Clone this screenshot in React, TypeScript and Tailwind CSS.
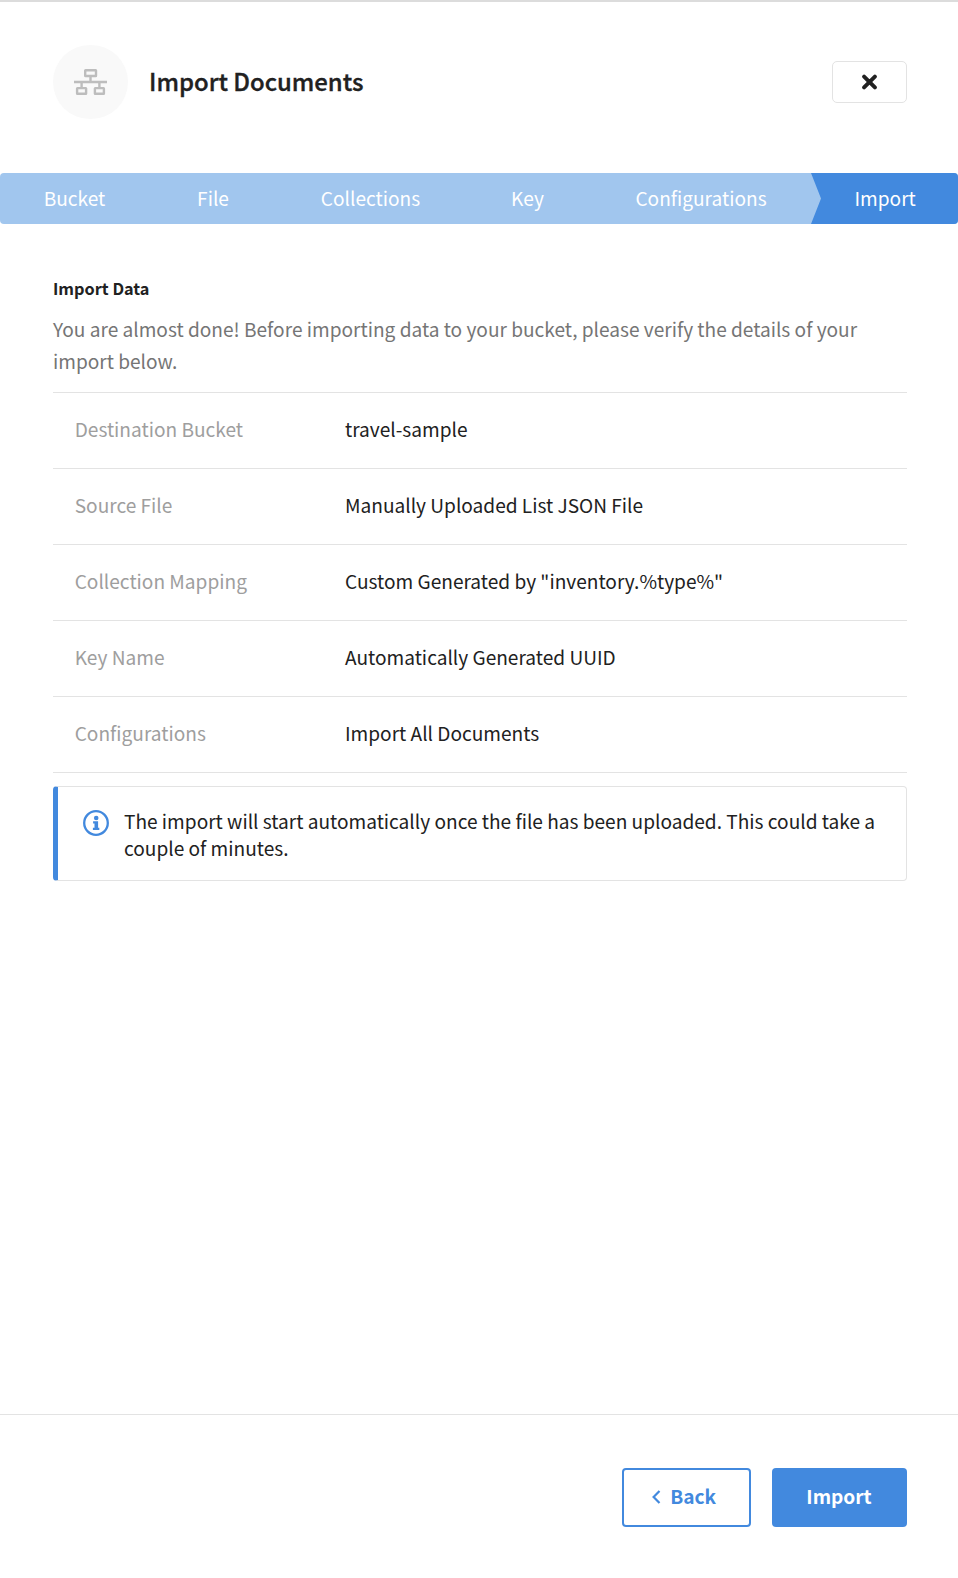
const steps = [
  { name: "Bucket", cls: "w-[149px]" },
  { name: "File", cls: "w-[128px]" },
  { name: "Collections", cls: "w-[187px]" },
  { name: "Key", cls: "w-[127px]" },
  { name: "Configurations", cls: "w-[220px]" },
];

const details = [
  ["Destination Bucket", "travel-sample"],
  ["Source File", "Manually Uploaded List JSON File"],
  ["Collection Mapping", 'Custom Generated by "inventory.%type%"'],
  ["Key Name", "Automatically Generated UUID"],
  ["Configurations", "Import All Documents"],
];

function NetworkIcon() {
  return (
    <svg width="33" height="26" viewBox="0 0 33 26" fill="none" stroke="#bdbdbd" strokeWidth="2.4">
      <rect x="11.2" y="1.2" width="10.8" height="5.8" rx="0.3" />
      <rect x="3.1" y="19.1" width="9" height="5.7" rx="0.3" />
      <rect x="20.9" y="19.1" width="9" height="5.7" rx="0.3" />
      <path d="M0 13H33M16.5 7V13M7.6 13V19M25.4 13V19" />
    </svg>
  );
}

function InfoIcon() {
  return (
    <svg width="26" height="26" viewBox="0 0 26 26" className="shrink-0">
      <circle cx="13" cy="13" r="11.8" fill="none" stroke="#4289de" strokeWidth="2.3" />
      <circle cx="13.2" cy="8" r="2.3" fill="#4289de" />
      <path d="M10.1 11.3H15.1V17.8H16.3V19.9H9.9V17.8H11.5V13.4H10.1Z" fill="#4289de" />
    </svg>
  );
}

export default function App() {
  return (
    <div className="flex h-[1578px] w-[958px] flex-col border-t-2 border-[#dcdcdc] bg-white font-['Noto_Sans_CJK_SC',sans-serif] text-[19.1px] text-[#212121]">
      <header className="flex h-[171px] items-start pr-[51px] pl-[53px] pt-[43px]">
        <div className="flex h-[74px] w-[75px] items-center justify-center rounded-full bg-[#f9f9f9]">
          <NetworkIcon />
        </div>
        <h1 className="ml-[21px] text-[23.9px] leading-[72px] font-medium [-webkit-text-stroke:0.35px_#212121]">
          Import Documents
        </h1>
        <button className="mt-4 ml-auto flex h-[42px] w-[75px] items-center justify-center rounded-[5px] border border-[#e3e3e3]">
          <svg width="15" height="16" viewBox="0 0 15 16" stroke="#212121" strokeWidth="3.9" strokeLinecap="round">
            <path d="M2.1 2.6L12.9 13.4M12.9 2.6L2.1 13.4" />
          </svg>
        </button>
      </header>

      <nav className="flex h-[51px] shrink-0 overflow-hidden rounded-[4px] bg-[#a1c6ee] leading-[51px] text-white">
        {steps.map((s) => (
          <div key={s.name} className={s.cls + " shrink-0 text-center"}>{s.name}</div>
        ))}
        <div className="flex-1 bg-[#4289de] pl-[43.5px] [clip-path:polygon(0_0,100%_0,100%_100%,0_100%,10px_50%)]">
          Import
        </div>
      </nav>

      <main className="flex-1 pr-[51px] pl-[53px] pt-[52px]">
        <h2 className="text-[16.3px] leading-[25px] font-bold">Import Data</h2>
        <p className="mt-[12px] leading-8 text-[#757575]">
          You are almost done! Before importing data to your bucket, please verify the details of your
          <br />
          import below.
        </p>
        <dl className="mt-[15px] border-t border-[#e3e3e3]">
          {details.map(([label, value]) => (
            <div key={label} className="flex h-[76px] border-b border-[#e3e3e3] pl-[21.7px] leading-[73px]">
              <dt className="w-[270.3px] text-[#9e9e9e]">{label}</dt>
              <dd>{value}</dd>
            </div>
          ))}
        </dl>
        <div className="mt-[13px] flex h-[95px] rounded-[4px] border border-l-[5px] border-[#e3e3e3] border-l-[#4289de] pt-[21px] pl-[25.4px]">
          <div className="mt-[2.2px] shrink-0">
            <InfoIcon />
          </div>
          <p className="ml-[14.6px] leading-[27px]">
            The import will start automatically once the file has been uploaded. This could take a
            <br />
            couple of minutes.
          </p>
        </div>
      </main>

      <footer className="flex h-[164px] shrink-0 items-start justify-end gap-[21px] border-t border-[#e3e3e3] pt-[53px] pr-[51px] font-bold">
        <button className="flex h-[59px] w-[129px] items-center rounded-[4px] border-2 border-[#4289de] pb-[2px] pl-[28px] text-[#4289de]">
          <svg width="9" height="14" viewBox="0 0 9 14" fill="none" stroke="#4289de" strokeWidth="2.2">
            <path d="M7.5 1L1.6 7L7.5 13" />
          </svg>
          <span className="ml-[9.2px]">Back</span>
        </button>
        <button className="h-[59px] w-[135px] rounded-[4px] bg-[#4289de] pr-[1px] pb-[2px] text-white">Import</button>
      </footer>
    </div>
  );
}
